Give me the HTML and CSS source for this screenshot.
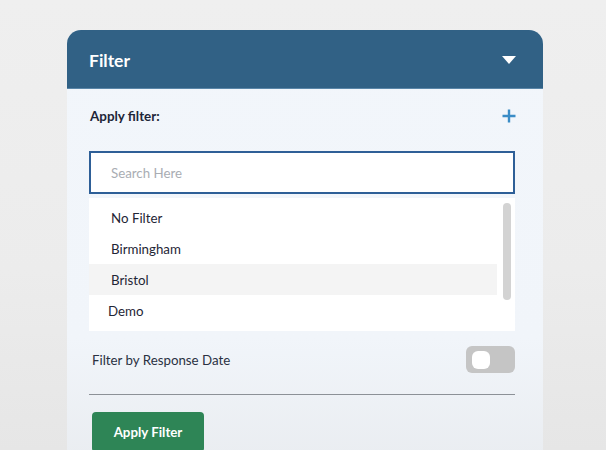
FILE: index.html
```html
<!DOCTYPE html>
<html>
<head>
<meta charset="utf-8">
<link rel="stylesheet" href="styles.css">
</head>
<body>
<div class="page">
  <div class="card">
    <div class="card-header">
      <span class="title">Filter</span>
      <span class="caret"></span>
    </div>
    <div class="card-body">
      <div class="apply-row">
        <span class="label">Apply filter:</span>
        <svg class="plus" width="14" height="14" viewBox="0 0 14 14"><path d="M7 0.5V13.5M0.5 7H13.5" stroke="#3a8cc6" stroke-width="2.4"/></svg>
      </div>
      <div class="search"><span class="placeholder">Search Here</span></div>
      <div class="list">
        <div class="items">
          <div class="item">No Filter</div>
          <div class="item">Birmingham</div>
          <div class="item hover">Bristol</div>
          <div class="item demo">Demo</div>
        </div>
        <div class="scrollbar"><div class="thumb"></div></div>
      </div>
      <div class="date-row">
        <span class="date-label">Filter by Response Date</span>
        <span class="toggle"><span class="knob"></span></span>
      </div>
      <div class="divider"></div>
      <div class="btn">Apply Filter</div>
    </div>
  </div>
</div>
</body>
</html>
```
FILE: styles.css
```css
html, body {
  margin: 0;
  height: 100%;
}
body {
  background: linear-gradient(#efefef 0%, #ececec 60%, #e6e6e6 100%);
  font-family: "Lato", "Inter", sans-serif;
  overflow: hidden;
}
.page {
  padding: 30px 0 0 67px;
}
.card {
  width: 476px;
  height: 440px;
  border-radius: 14px 14px 0 0;
  overflow: hidden;
  background: linear-gradient(#f2f6fb 0%, #f1f5fa 70%, #e9ecf0 100%);
}
.card-header {
  height: 58px;
  background: #316185;
  display: flex;
  align-items: center;
  justify-content: space-between;
  padding: 0 27px 0 22px;
  border-bottom: 1px solid #5a86a8;
}
.title {
  color: #fff;
  font-size: 17.5px;
  font-weight: 700;
  margin-top: 2px;
}
.caret {
  width: 0;
  height: 0;
  border-left: 7px solid transparent;
  border-right: 7px solid transparent;
  border-top: 8px solid #fff;
  margin-top: 1px;
}
.card-body {
  padding: 0 28px 0 22px;
}
.apply-row {
  height: 54px;
  display: flex;
  align-items: center;
  justify-content: space-between;
}
.label {
  font-size: 13.4px;
  font-weight: 700;
  color: #1e2638;
  margin-left: 1px;
}
.plus {
  margin-right: -1px;
}
.search {
  margin-top: 8px;
  height: 39px;
  border: 2px solid #2e5f97;
  background: #fff;
  display: flex;
  align-items: center;
  padding-left: 20px;
}
.placeholder {
  font-size: 13.3px;
  color: #a9adb3;
}
.list {
  margin-top: 4px;
  height: 133px;
  background: #fff;
  display: flex;
  box-sizing: border-box;
  padding-top: 4px;
}
.items {
  flex: 1;
}
.item {
  height: 31px;
  display: flex;
  align-items: center;
  padding-left: 22px;
  font-size: 13.3px;
  color: #1f2636;
}
.item.hover {
  background: #f4f4f4;
}
.item.demo {
  padding-left: 19px;
}
.scrollbar {
  width: 17px;
  display: flex;
  justify-content: center;
  padding-left: 1px;
  padding-top: 1px;
}
.thumb {
  width: 8px;
  height: 97px;
  border-radius: 4px;
  background: #d3d3d3;
}
.date-row {
  margin-top: 15px;
  height: 27px;
  display: flex;
  align-items: center;
  justify-content: space-between;
}
.date-label {
  margin-left: 3px;
  font-size: 13.3px;
  color: #2a3142;
}
.toggle {
  width: 49px;
  height: 27px;
  border-radius: 6px;
  background: #c5c5c5;
  display: flex;
  align-items: center;
  padding-left: 6px;
  box-sizing: border-box;
}
.knob {
  width: 18px;
  height: 18px;
  border-radius: 6px;
  background: #fff;
}
.divider {
  margin-top: 21px;
  height: 1px;
  background: #8c9197;
}
.btn {
  margin: 17px 0 0 3px;
  width: 112px;
  height: 40px;
  border-radius: 4px;
  background: #2e8556;
  color: #fff;
  font-size: 13.3px;
  font-weight: 700;
  display: flex;
  align-items: center;
  justify-content: center;
}
```
